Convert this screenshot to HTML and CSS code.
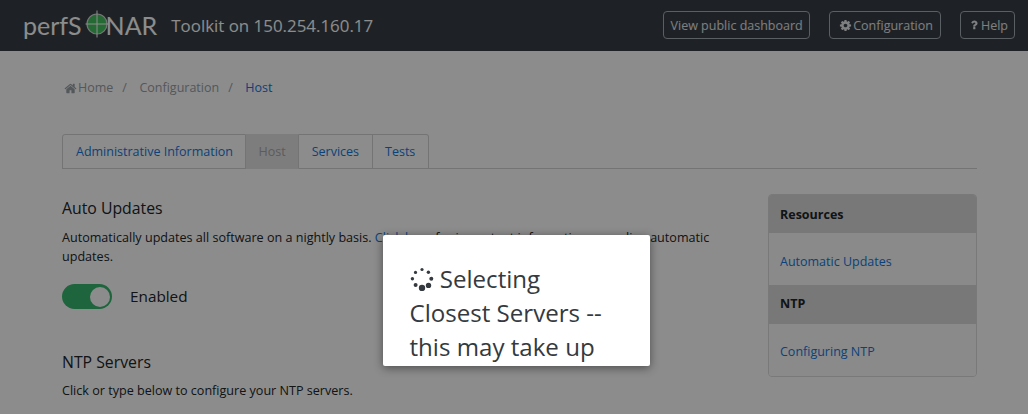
FILE: index.html
```html
<!DOCTYPE html>
<html lang="en">
<head>
<meta charset="utf-8">
<title>perfSONAR Toolkit</title>
<link rel="stylesheet" href="styles.css">
</head>
<body>
<div class="page">
  <header class="topbar">
    <div class="brand">
      <span class="logo">perfS<svg class="logo-o" viewBox="0 0 28 28" aria-hidden="true"><circle cx="14" cy="14" r="10" fill="#44c060" stroke="#d8d8d8" stroke-width="1.2"/><path d="M14 .5v27M2.5 14h23" stroke="#fff" stroke-width="1"/></svg>NAR</span>
      <span class="toolkit">Toolkit on 150.254.160.17</span>
    </div>
    <nav class="actions">
      <a class="btn btn-wide" href="#">View public dashboard</a>
      <a class="btn btn-config" href="#"><svg class="fa fa-cog" viewBox="0 0 1792 1792"><path d="M1152 896q0-106-75-181t-181-75-181 75-75 181 75 181 181 75 181-75 75-181zm512-109v222q0 12-8 23t-20 13l-185 28q-19 54-39 91 35 50 107 138 10 12 10 25t-9 23q-27 37-99 108t-94 71q-12 0-26-9l-138-108q-44 23-91 38-16 136-29 186-7 28-36 28h-222q-14 0-24.5-8.5t-11.5-21.5l-28-184q-49-16-90-37l-141 107q-10 9-25 9-14 0-25-11-126-114-165-168-7-10-7-23 0-12 8-23 15-21 51-66.5t54-70.5q-27-50-41-99l-183-27q-13-2-21-12.5t-8-23.5v-222q0-12 8-23t19-13l186-28q14-46 39-92-40-57-107-138-10-12-10-24 0-10 9-23 26-36 98.5-107.5t94.5-71.5q13 0 26 10l138 107q44-23 91-38 16-136 29-186 7-28 36-28h222q14 0 24.5 8.5t11.5 21.5l28 184q49 16 90 37l142-107q9-9 24-9 13 0 25 10 129 119 165 170 7 8 7 22 0 12-8 23-15 21-51 66.5t-54 70.5q26 50 41 98l183 28q13 2 21 12.5t8 23.5z"/></svg>Configuration</a>
      <a class="btn" href="#"><svg class="fa fa-q" viewBox="448 256 1024 1300"><path d="M1088 1256v240q0 16-12 28t-28 12h-240q-16 0-28-12t-12-28v-240q0-16 12-28t28-12h240q16 0 28 12t12 28zm316-600q0 54-15.5 101t-35 76.5-55 59.5-57.5 43.5-61 35.5q-41 23-68.5 65t-27.5 67q0 17-12 32.5t-28 15.5h-240q-15 0-25.5-18.5t-10.5-37.5v-45q0-83 65-156.5t143-108.5q59-27 84-56t25-76q0-42-46.5-74t-107.5-32q-65 0-108 29-35 25-107 115-13 16-31 16-12 0-25-8l-164-125q-13-10-15.5-25t5.5-28q160-266 464-266 80 0 161 31t146 83 106 127.5 41 158.5z"/></svg>Help</a>
    </nav>
  </header>

  <main class="content">
    <ol class="crumbs">
      <li><a class="crumb-muted" href="#"><svg class="fa fa-home" viewBox="0 0 1792 1792"><path d="M1472 992v480q0 26-19 45t-45 19h-384v-384h-256v384h-384q-26 0-45-19t-19-45v-480q0-1 .5-3t.5-3l575-474 575 474q1 2 1 6zm223-69l-62 74q-8 9-21 11h-3q-13 0-21-7l-692-577-692 577q-12 8-24 7-13-2-21-11l-62-74q-8-10-7-23.5t11-21.5l719-599q32-26 76-26t76 26l244 204v-195q0-14 9-23t23-9h192q14 0 23 9t9 23v408l219 182q10 8 11 21.5t-7 23.5z"/></svg>Home</a></li>
      <li class="sep">/</li>
      <li><a class="crumb-muted" href="#">Configuration</a></li>
      <li class="sep">/</li>
      <li><a href="#">Host</a></li>
    </ol>

    <div class="tabs">
      <a class="tab" href="#">Administrative Information</a>
      <span class="tab tab-active">Host</span>
      <a class="tab" href="#">Services</a>
      <a class="tab" href="#">Tests</a>
    </div>

    <div class="columns">
      <section class="primary">
        <h2 class="section-title">Auto Updates</h2>
        <p class="section-text">Automatically updates all software on a nightly basis. <a href="#">Click here</a> for important information regarding automatic updates.</p>
        <div class="toggle-row">
          <span class="toggle"><span class="knob"></span></span>
          <span class="toggle-label">Enabled</span>
        </div>
        <h2 class="section-title ntp-title">NTP Servers</h2>
        <p class="section-text ntp-text">Click or type below to configure your NTP servers.</p>
      </section>
      <aside class="sidebar">
        <h3 class="side-head">Resources</h3>
        <div class="side-body"><a href="#">Automatic Updates</a></div>
        <h3 class="side-head">NTP</h3>
        <div class="side-body"><a href="#">Configuring NTP</a></div>
      </aside>
    </div>
  </main>

  <div class="overlay"></div>

  <div class="modal">
    <svg class="spinner" viewBox="0 0 24 24" aria-hidden="true">
      <circle cx="12" cy="21" r="3.2"/>
      <circle cx="18.5" cy="18.4" r="2.7"/>
      <circle cx="21.3" cy="11.8" r="2"/>
      <circle cx="18.4" cy="5.3" r="1.7"/>
      <circle cx="12" cy="2.5" r="1.6"/>
      <circle cx="5.5" cy="5.4" r="1.6"/>
      <circle cx="2.4" cy="11.8" r="1.7"/>
      <circle cx="5.6" cy="18" r="2"/>
    </svg>
    <span>Selecting Closest Servers -- this may take up to a minute</span>
  </div>
</div>
</body>
</html>
```
FILE: styles.css
```css
* { box-sizing: border-box; }
html, body { margin: 0; padding: 0; }
body {
  font-family: "Open Sans", "Noto Sans", sans-serif;
  font-size: 12.5px;
  line-height: 18.75px;
  color: #212529;
  background: #fff;
}
a { color: #1478e0; text-decoration: none; }

.page { position: relative; width: 1028px; height: 414px; overflow: hidden; background: #fff; }

.topbar {
  height: 51px;
  background: #383f46;
  display: flex;
  align-items: center;
  justify-content: space-between;
  padding: 0 13px 0 23px;
}
.brand { display: flex; align-items: center; color: #fff; }
.logo {
  display: flex;
  align-items: center;
  font-family: "Lato", "Open Sans", sans-serif;
  font-size: 25px;
  line-height: 30px;
  color: #fff;
  margin-top: -1px;
}
.logo-o { width: 28px; height: 28px; margin: -2px -5px 0 1px; }
.toolkit { font-size: 16.9px; margin-left: 14px; margin-top: 2px; }

.actions { display: flex; gap: 19px; margin-top: -1px; }
.btn {
  height: 28px;
  display: flex;
  align-items: center;
  padding: 2px 6px 0;
  border: 1px solid #a4adb4;
  border-radius: 4px;
  color: #e6e8ea;
  font-size: 12.5px;
}
.btn-wide { padding: 2px 6.5px 0; }
.btn-config { padding-right: 7px; }
.fa { width: 13px; height: 13px; fill: currentColor; margin-right: 2px; }
.btn .fa { margin-top: -2px; }
.fa-cog { margin-left: 3px; }
.btn .fa-cog { margin-right: 1px; }
.fa-q { width: 7px; height: 10px; margin-right: 3px; margin-left: 4px; }

.content { padding: 27px 51px 0 62px; }
.crumbs {
  list-style: none;
  margin: 0;
  padding: 0 0 0 2px;
  display: flex;
  height: 20px;
  align-items: center;
}
.crumb-muted { color: #99a0a6; display: flex; align-items: center; }
.fa-home { margin-right: 1px; }
.sep { color: #99a0a6; padding: 0 12.5px 0 9px; }

.tabs {
  margin-top: 36px;
  display: flex;
  height: 35px;
  border-bottom: 1px solid #d4d4d4;
}
.tab {
  display: flex;
  align-items: center;
  padding: 1px 12.5px 0;
  height: 35px;
  border: 1px solid #d4d4d4;
  border-left-width: 0;
}
.tab:first-child { border-left-width: 1px; border-top-left-radius: 3px; padding: 1px 12px 0 13px; }
.tab:last-child { border-top-right-radius: 3px; }
.tab-active { background: #e4e4e4; color: #a8a8a8; border-color: #e4e4e4; border-right-color: #d4d4d4; }

.columns { display: flex; justify-content: space-between; margin-top: 25px; }
.primary { width: 660px; }
.section-title { margin: 0; font-size: 15.8px; font-weight: 400; line-height: 28px; }
.section-text { margin: 7px 0 0; font-size: 12.58px; }
.toggle-row { display: flex; align-items: center; gap: 18px; margin-top: 17.5px; }
.toggle {
  width: 50px;
  height: 25px;
  border-radius: 13px;
  background: #37b96f;
  display: flex;
  justify-content: flex-end;
  align-items: center;
  padding-right: 2px;
}
.knob { width: 20px; height: 20px; border-radius: 50%; background: #fff; }
.toggle-label { font-size: 15.3px; margin-top: -1px; }
.ntp-title { margin-top: 39px; }
.ntp-text { margin-top: 6px; }

.sidebar {
  width: 209px;
  height: 183px;
  border: 1px solid #dcdcdc;
  border-radius: 4px;
  overflow: hidden;
}
.side-head {
  margin: 0;
  height: 39px;
  display: flex;
  align-items: center;
  padding-left: 11px;
  background: #dadada;
  font-size: 12.5px;
  font-weight: 700;
}
.side-head:first-child { height: 38px; padding-top: 2px; }
.side-body {
  height: 52px;
  display: flex;
  align-items: center;
  padding: 4px 0 0 11px;
  background: #fbfbfb;
}
.side-head:first-child + .side-body { padding-top: 6px; }

.overlay { position: absolute; inset: 0; background: rgba(0, 0, 0, .45); }

.modal {
  position: absolute;
  left: 383px;
  top: 235px;
  width: 267px;
  height: 131px;
  overflow: hidden;
  padding: 27px 26.5px 0;
  background: #fff;
  border-radius: 2px;
  box-shadow: 0 2px 10px rgba(0, 0, 0, .45);
  font-size: 24.1px;
  line-height: 34px;
  color: #343a40;
}
.spinner { width: 24px; height: 24px; fill: #343a40; vertical-align: -3px; }
```
